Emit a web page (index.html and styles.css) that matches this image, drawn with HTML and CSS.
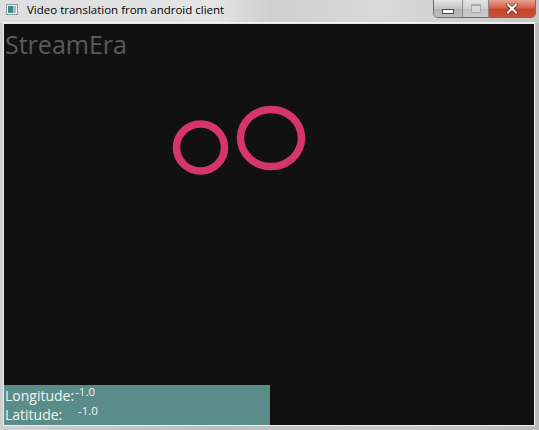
FILE: index.html
```html
<!DOCTYPE html>
<html>
<head>
<meta charset="utf-8">
<link rel="stylesheet" href="styles.css">
</head>
<body>
<div class="window">
  <div class="titlebar">
    <svg class="app-icon" width="12" height="11" viewBox="0 0 12 11">
      <rect x="0.5" y="0.5" width="11" height="10" fill="#f4f4f4" stroke="#8a9a9a"/>
      <rect x="2" y="2" width="5" height="7" fill="#3d8c84"/>
      <rect x="7" y="2" width="3" height="7" fill="#9fc4c0"/>
    </svg>
    <span class="title">Video translation from android client</span>
    <div class="controls">
      <div class="btn btn-min"><span class="min-glyph"></span></div>
      <div class="btn btn-max"><span class="max-glyph"></span></div>
      <div class="btn btn-close">
        <svg width="14" height="11" viewBox="0 0 14 11">
          <path d="M3 1.5 L11 9.5 M11 1.5 L3 9.5" stroke="#5a1a10" stroke-width="3.6" stroke-linecap="square"/>
          <path d="M3 1.5 L11 9.5 M11 1.5 L3 9.5" stroke="#ffffff" stroke-width="2.2" stroke-linecap="square"/>
        </svg>
      </div>
    </div>
  </div>
  <div class="frame-row">
    <div class="client">
      <div class="brand">StreamEra</div>
      <svg class="video" width="530" height="120" viewBox="0 0 530 120">
        <defs>
          <filter id="soft" x="-20%" y="-20%" width="140%" height="140%">
            <feGaussianBlur stdDeviation="0.7"/>
          </filter>
        </defs>
        <g filter="url(#soft)" fill="none" stroke="#d5356a" stroke-width="7.5">
          <ellipse cx="196.5" cy="85.5" rx="24" ry="23.5"/>
          <ellipse cx="267" cy="76" rx="30.5" ry="28.5"/>
        </g>
      </svg>
      <div class="geo">
        <div class="geo-row"><span class="geo-label">Longitude:</span><span class="geo-val">-1.0</span></div>
        <div class="geo-row"><span class="geo-label geo-label-wide">Latitude:</span><span class="geo-val">-1.0</span></div>
      </div>
    </div>
  </div>
</div>
</body>
</html>
```
FILE: styles.css
```css
html, body {
  margin: 0;
  padding: 0;
  overflow: hidden;
}
body {
  width: 539px;
  height: 430px;
  background: #a8a8a8;
}
.window {
  width: 539px;
  height: 430px;
  display: flex;
  flex-direction: column;
  background: linear-gradient(90deg, #cfcfcf 0, #bdbdbd 40%, #c9c9c9 70%, #bcbcbc 100%);
}
.titlebar {
  height: 23px;
  flex: none;
  display: flex;
  align-items: flex-start;
  background: linear-gradient(90deg, #dedede 0%, #e4e4e4 40%, #cfcfcf 50%, #d9d9d9 70%, #c8c8c8 100%);
}
.app-icon {
  margin: 4px 0 0 6px;
  flex: none;
}
.title {
  margin: 3px 0 0 9px;
  font-family: "Open Sans", "DejaVu Sans", sans-serif;
  font-size: 11.5px;
  line-height: 14px;
  color: #000;
}
.controls {
  margin-left: auto;
  margin-right: 3px;
  display: flex;
  height: 17px;
  border: 1px solid #6e6e6e;
  border-top: none;
  border-radius: 0 0 5px 5px;
  overflow: hidden;
}
.btn {
  height: 17px;
  display: flex;
  align-items: center;
  justify-content: center;
}
.btn-min {
  width: 28px;
  background: linear-gradient(#e6e6e6, #c4c4c4 50%, #b2b2b2 51%, #bdbdbd);
  border-right: 1px solid #8a8a8a;
}
.btn-max {
  width: 25px;
  background: linear-gradient(#e4e4e4, #cfcfcf 50%, #c2c2c2 51%, #cacaca);
  border-right: 1px solid #8a8a8a;
}
.btn-close {
  width: 46px;
  background: linear-gradient(#e8a090, #d8634b 45%, #c7432c 55%, #c65038);
}
.min-glyph {
  display: block;
  width: 10px;
  height: 3px;
  margin-top: 6px;
  background: #fff;
  border: 1px solid #4a4a4a;
}
.max-glyph {
  display: block;
  width: 8px;
  height: 6px;
  border: 1px solid #a9a9a9;
  border-top-width: 2px;
  background: #d8d8d8;
}
.frame-row {
  flex: 1;
  display: flex;
  padding: 0 5px 5px 4px;
  min-height: 0;
}
.client {
  flex: 1;
  background: #111111;
  display: flex;
  flex-direction: column;
  border-top: 1px solid #e8e8e8;
  box-shadow: 0 0 0 1px #f0f0f0;
}
.brand {
  font-family: "Open Sans", "DejaVu Sans", sans-serif;
  font-size: 25px;
  line-height: 32px;
  padding: 4px 0 0 1px;
  height: 34px;
  color: #5a5a5a;
}
.video {
  display: block;
  flex: none;
}
.geo {
  margin-top: auto;
  width: 266px;
  height: 40px;
  background: #5a8d89;
  padding: 1px 0 0 1px;
  box-sizing: border-box;
}
.geo-row {
  display: flex;
  align-items: flex-start;
  height: 19px;
}
.geo-label {
  font-family: "Open Sans", "DejaVu Sans", sans-serif;
  font-size: 14px;
  line-height: 19px;
  color: #eef4f2;
}
.geo-label-wide {
  width: 72px;
}
.geo-val {
  font-family: "Open Sans", "DejaVu Sans", sans-serif;
  font-size: 11.5px;
  line-height: 12px;
  color: #eef4f2;
  margin-left: 1px;
}
```
